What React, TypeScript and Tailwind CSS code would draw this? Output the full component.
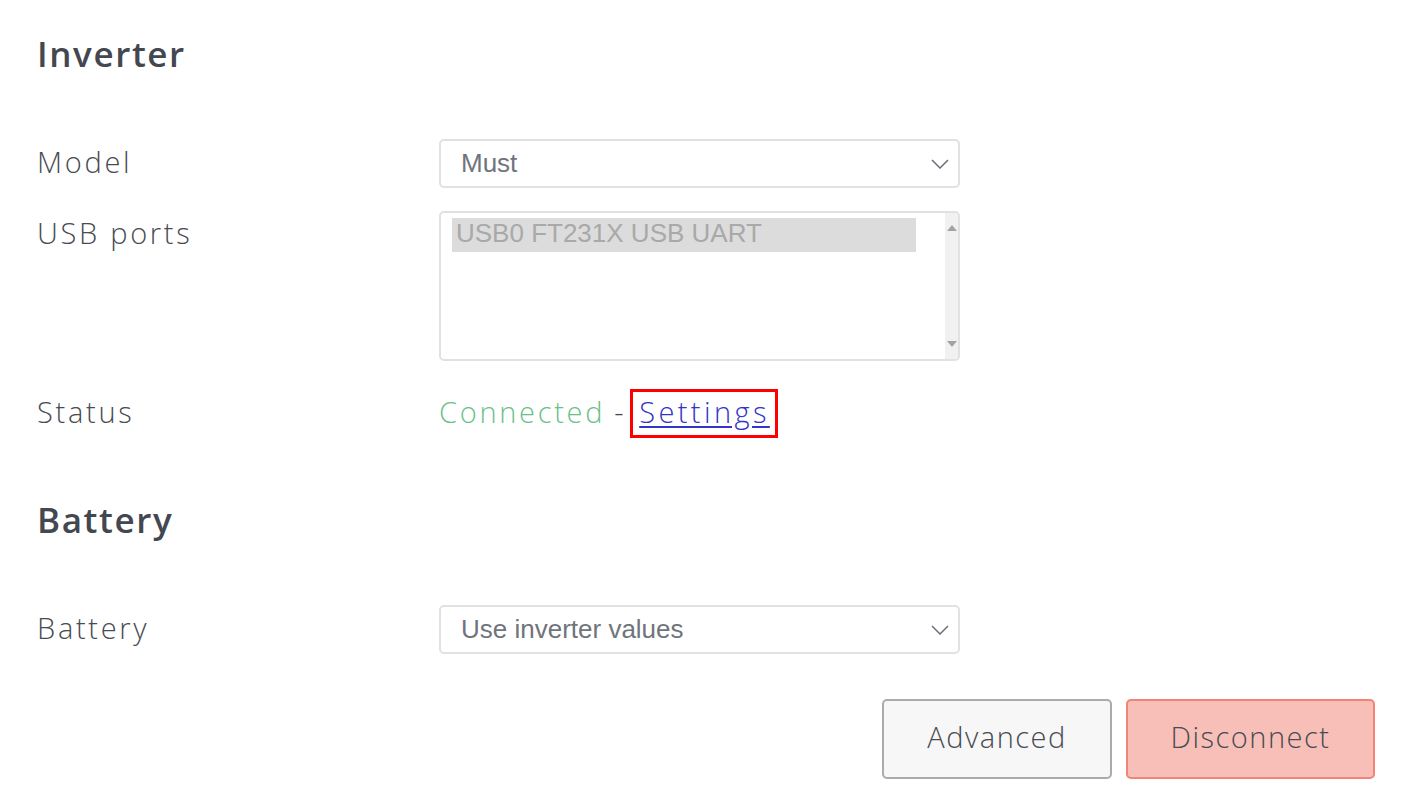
const labelFont = "'Open Sans', 'Noto Sans', sans-serif";
const selectFont = "'Liberation Sans', Arial, sans-serif";

function Chevron() {
  return (
    <svg
      width="18"
      height="10"
      viewBox="0 0 18 10"
      className="absolute right-[9px] top-1/2 -translate-y-1/2"
    >
      <path d="M1 1 L9 9 L17 1" fill="none" stroke="#6b6f78" strokeWidth="1.5" />
    </svg>
  );
}

function SelectBox({ value }: { value: string }) {
  return (
    <div className="relative w-[521px] h-[49px] rounded-[5px] border-2 border-[#e1e1e1] bg-white flex items-center pl-[20px]">
      <span className="text-[26px] text-[#70747c]" style={{ fontFamily: selectFont }}>
        {value}
      </span>
      <Chevron />
    </div>
  );
}

function Row({
  label,
  children,
  top = false,
}: {
  label: string;
  children: React.ReactNode;
  top?: boolean;
}) {
  return (
    <div className={`flex ${top ? "items-start" : "items-center"}`}>
      <div className="w-[402px] h-[48px] flex items-center pb-[4px] text-[29px] font-light tracking-[2.7px] text-[#474b53]">
        {label}
      </div>
      {children}
    </div>
  );
}

export default function App() {
  return (
    <div
      className="min-h-screen bg-white pl-[37px] pr-[33px] pt-[30px]"
      style={{ fontFamily: labelFont }}
    >
      <h2 className="text-[35px] font-semibold leading-[48px] text-[#434750] tracking-[1.6px]">
        Inverter
      </h2>

      <div className="mt-[61px]">
        <Row label="Model">
          <SelectBox value="Must" />
        </Row>
      </div>

      <div className="mt-[23px]">
        <Row label="USB ports" top>
          <div className="w-[521px] h-[150px] rounded-[5px] border-2 border-[#e1e1e1] bg-white flex overflow-hidden">
            <div className="flex-1 pl-[11px] pt-[5px] pr-[29px]">
              <div
                className="h-[34px] bg-[#dcdcdc] text-[26px] leading-[31px] text-[#a9a9a9] pl-[4px]"
                style={{ fontFamily: selectFont }}
              >
                USB0 FT231X USB UART
              </div>
            </div>
            <div className="w-[13px] bg-[#f1f1f1] flex flex-col items-center justify-between py-[12px]">
              <svg width="10" height="6" viewBox="0 0 10 6">
                <path d="M0 6 L5 0 L10 6 Z" fill="#a3a3a3" />
              </svg>
              <svg width="10" height="6" viewBox="0 0 10 6">
                <path d="M0 0 L5 6 L10 0 Z" fill="#a3a3a3" />
              </svg>
            </div>
          </div>
        </Row>
      </div>

      <div className="mt-[28px]">
        <Row label="Status">
          <div className="flex items-center text-[29px] font-light tracking-[2.7px]">
            <span className="text-[#6dbf8a] pb-[4px]">Connected</span>
            <span className="text-[#474b53] ml-[9px] mr-[4px] pb-[4px]">-</span>
            <span className="border-[3px] border-[#ff0000] h-[49px] pl-[6px] pr-[5px] flex items-center pb-[4px]">
              <a
                href="#"
                className="text-[#3434c8] underline underline-offset-[3px] tracking-[3.4px]"
              >
                Settings
              </a>
            </span>
          </div>
        </Row>
      </div>

      <h2 className="mt-[58px] text-[35px] font-semibold leading-[48px] text-[#434750] tracking-[1.6px]">
        Battery
      </h2>

      <div className="mt-[61px]">
        <Row label="Battery">
          <SelectBox value="Use inverter values" />
        </Row>
      </div>

      <div className="mt-[45px] flex justify-end gap-[14px]">
        <button className="w-[230px] h-[80px] rounded-[5px] border-2 border-[#ababab] bg-[#f7f7f7] pb-[4px] text-[29px] font-light tracking-[1.5px] text-[#474b53]">
          Advanced
        </button>
        <button className="w-[249px] h-[80px] rounded-[5px] border-2 border-[#f08478] bg-[#f8bfb8] pb-[4px] text-[29px] font-light tracking-[1.5px] text-[#474b53]">
          Disconnect
        </button>
      </div>
    </div>
  );
}
